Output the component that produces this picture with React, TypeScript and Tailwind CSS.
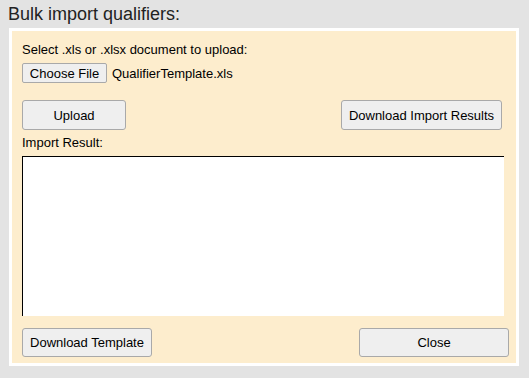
const btn =
  "flex items-center justify-center bg-[#efefef] border border-[#a9a9a9] rounded-[3px] text-[13px] text-black";

export default function App() {
  return (
    <div
      className="w-[529px] h-[378px] bg-[#e3e3e3] overflow-hidden"
      style={{ fontFamily: '"Liberation Sans", Arial, sans-serif' }}
    >
      <h1 className="pl-[8px] pt-[4px] mb-[3px] text-[18px] leading-[21px] text-[#222]">
        Bulk import qualifiers:
      </h1>

      <div className="ml-[9px] w-[510px] h-[338px] border-[3px] border-white bg-[#fdedcd]">
        <div className="pl-[10px] pr-[7px] pt-[11px] pb-[6px] text-[13px] leading-[15px] text-black">
          <div>Select .xls or .xlsx document to upload:</div>

          <div className="mt-[6px] flex items-center gap-[5px]">
            <button className="h-[20px] w-[85px] flex items-center justify-center bg-[#efefef] border border-[#a9a9a9] rounded-[2px] text-[13px]">
              Choose File
            </button>
            <span>QualifierTemplate.xls</span>
          </div>

          <div className="mt-[17px] pr-[7px] flex justify-between">
            <button className={`${btn} w-[104px] h-[30px]`}>Upload</button>
            <button className={`${btn} w-[161px] h-[30px]`}>Download Import Results</button>
          </div>

          <div className="mt-[5px]">Import Result:</div>

          <div className="mt-[6px] w-[482px] h-[160px] bg-white border-l border-t border-black" />

          <div className="mt-[12px] flex justify-between">
            <button className={`${btn} w-[130px] h-[29px]`}>Download Template</button>
            <button className={`${btn} w-[150px] h-[29px]`}>Close</button>
          </div>
        </div>
      </div>
    </div>
  );
}
